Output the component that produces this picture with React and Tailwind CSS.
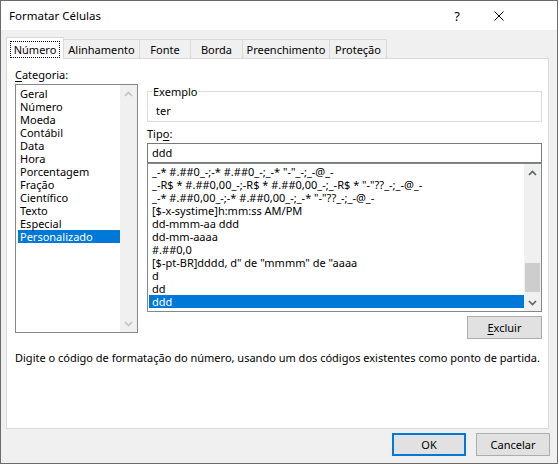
import React from "react";

const Chevron = ({ up, color }) => (
  <svg width="9" height="6" viewBox="0 0 9 6">
    <polyline
      points={up ? "1,5 4.5,1.5 8,5" : "1,1 4.5,4.5 8,1"}
      fill="none"
      stroke={color}
      strokeWidth="1.6"
    />
  </svg>
);

const cats = [
  "Geral",
  "Número",
  "Moeda",
  "Contábil",
  "Data",
  "Hora",
  "Porcentagem",
  "Fração",
  "Científico",
  "Texto",
  "Especial",
  "Personalizado",
];

const types = [
  '_-* #.##0_-;-* #.##0_-;_-* "-"_-;_-@_-',
  '_-R$ * #.##0,00_-;-R$ * #.##0,00_-;_-R$ * "-"??_-;_-@_-',
  '_-* #.##0,00_-;-* #.##0,00_-;_-* "-"??_-;_-@_-',
  "[$-x-systime]h:mm:ss AM/PM",
  "dd-mmm-aa ddd",
  "dd-mm-aaaa",
  "#.##0,0",
  '[$-pt-BR]dddd, d" de "mmmm" de "aaaa',
  "d",
  "dd",
  "ddd",
];

export default function App() {
  return (
    <div className="w-[560px] h-[464px] bg-white font-['Noto_Sans',sans-serif] text-[11px] leading-[16px] text-black">
      <div className="w-[558px] h-[464px] border border-[#6b6b6b] flex flex-col bg-[#f0f0f0]">
        {/* Title bar */}
        <div className="h-[29px] bg-white flex items-center shrink-0">
          <span className="ml-[8px] flex-1 text-[11.5px]">Formatar Células</span>
          <span className="text-[13px] mr-[34px]">?</span>
          <svg width="10" height="10" viewBox="0 0 10 10" className="mr-[53px]">
            <path d="M0.5 0.5 L9.5 9.5 M9.5 0.5 L0.5 9.5" stroke="#000" strokeWidth="1" />
          </svg>
        </div>

        {/* Body */}
        <div className="flex-1 flex flex-col pl-[5px]">
          {/* Tabs */}
          <div className="mt-[7px] h-[21px] flex items-end">
            <div className="relative z-10 w-[58px] h-[22px] -mb-[1px] bg-white border-l border-r border-t border-[#d9d9d9] px-[3px] pt-[3px]">
              <div className="h-[17px] border border-dotted border-black flex items-center justify-center">
                Número
              </div>
            </div>
            {[
              ["Alinhamento", "w-[76px]"],
              ["Fonte", "w-[51px]"],
              ["Borda", "w-[52px]"],
              ["Preenchimento", "w-[87px]"],
              ["Proteção", "w-[57px]"],
            ].map(([t, w]) => (
              <div
                key={t}
                className={`${w} h-[19px] border-t border-r border-[#d9d9d9] flex items-center justify-center pt-[2px]`}
              >
                {t}
              </div>
            ))}
          </div>

          {/* Panel */}
          <div className="w-[543px] h-[371px] bg-white border border-[#d9d9d9] pt-[8px] pl-[8px] flex flex-col">
            <div className="flex">
              {/* Left column */}
              <div className="w-[123px] flex flex-col">
                <div className="h-[16px]">
                  <span className="underline underline-offset-2">C</span>ategoria:
                </div>
                <div className="mt-[1px] h-[249px] border border-[#828790] flex">
                  <div className="w-[104px] pt-[2px] pl-[2px]">
                    {cats.map((c, i) => (
                      <div
                        key={c}
                        className={`h-[13px] leading-[13px] pl-[2px] ${
                          i === cats.length - 1 ? "bg-[#0078d7] text-white" : ""
                        }`}
                      >
                        {c}
                      </div>
                    ))}
                  </div>
                  <div className="w-[17px] bg-[#f0f0f0] flex flex-col justify-between">
                    <div className="h-[17px] flex items-center justify-center">
                      <Chevron up color="#c2c2c2" />
                    </div>
                    <div className="h-[17px] flex items-center justify-center">
                      <Chevron color="#c2c2c2" />
                    </div>
                  </div>
                </div>
              </div>

              {/* Right column */}
              <div className="ml-[9px] w-[395px] pt-[17px] flex flex-col">
                <div className="relative pt-[7px]">
                  <div className="h-[31px] border border-[#dcdcdc] pt-[11px] pl-[8px]">ter</div>
                  <div className="absolute top-0 left-[5px] px-[1px] bg-white">Exemplo</div>
                </div>
                <div className="mt-[4px] h-[16px]">
                  Tip<span className="underline underline-offset-2">o</span>:
                </div>
                <div className="mt-[1px] h-[20px] border border-[#7a7a7a] flex items-center pl-[4px]">
                  ddd
                </div>
                <div className="h-[149px] border border-[#828790] flex">
                  <div className="w-[376px] pt-[1px] pl-[1px]">
                    {types.map((t, i) => (
                      <div
                        key={t}
                        className={`h-[13px] leading-[13px] pl-[3px] whitespace-pre ${
                          i === types.length - 1 ? "bg-[#0078d7] text-white" : ""
                        }`}
                      >
                        {t}
                      </div>
                    ))}
                  </div>
                  <div className="w-[17px] bg-[#f0f0f0] flex flex-col">
                    <div className="h-[17px] flex items-center justify-center">
                      <Chevron up color="#606060" />
                    </div>
                    <div className="h-[113px] px-[1px]">
                      <div className="mt-[82px] h-[29px] bg-[#cdcdcd]" />
                    </div>
                    <div className="h-[17px] flex items-center justify-center">
                      <Chevron color="#606060" />
                    </div>
                  </div>
                </div>
                <div className="mt-[4px] self-end w-[75px] h-[23px] border border-[#adadad] bg-[#e1e1e1] flex items-center justify-center">
                  <span>
                    <span className="underline underline-offset-2">E</span>xcluir
                  </span>
                </div>
              </div>
            </div>
            <div className="mt-[11px] whitespace-nowrap">
              Digite o código de formatação do número, usando um dos códigos existentes como ponto de partida.
            </div>
          </div>

          {/* Buttons */}
          <div className="mt-[4px] flex justify-end gap-[10px] pr-[7px]">
            <div className="w-[74px] h-[23px] border-2 border-[#0078d7] bg-[#e1e1e1] flex items-center justify-center">
              OK
            </div>
            <div className="w-[74px] h-[23px] border border-[#adadad] bg-[#e1e1e1] flex items-center justify-center">
              Cancelar
            </div>
          </div>
        </div>
      </div>
    </div>
  );
}
